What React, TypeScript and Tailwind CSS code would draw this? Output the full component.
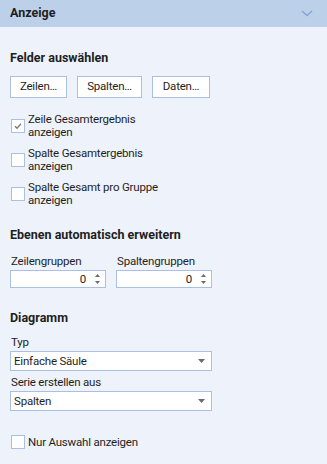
import React from "react";

const font = { fontFamily: 'Roboto, "Noto Sans", sans-serif' };

function Check({ checked = false }: { checked?: boolean }) {
  return (
    <div className="w-[14px] h-[14px] shrink-0 border border-[#a9bfe3] bg-white flex items-center justify-center">
      {checked && (
        <svg width="10" height="10" viewBox="0 0 10 10">
          <path d="M2 5.2 L4 7.2 L8 2.8" fill="none" stroke="#7a7a7a" strokeWidth="1.3" />
        </svg>
      )}
    </div>
  );
}

function CheckRow({ lines, checked }: { lines: string[]; checked?: boolean }) {
  return (
    <div className="flex items-center gap-[3px] pl-[1px]">
      <Check checked={checked} />
      <div className="leading-[13px]">
        {lines.map((l) => (
          <div key={l}>{l}</div>
        ))}
      </div>
    </div>
  );
}

function Spin({ label }: { label: string }) {
  return (
    <div className="flex flex-col w-[96px]">
      <div className="leading-[14px] pl-[1px] h-[16px]">{label}</div>
      <div className="h-[18px] border border-[#a9bfe3] bg-white flex items-center justify-end pr-[5px]">
        <span className="mr-[9px] leading-[14px]">0</span>
        <svg width="5" height="12" viewBox="0 0 5 12">
          <path d="M0 4 L2.5 1 L5 4 Z" fill="#6b6b6b" />
          <path d="M0 8 L2.5 11 L5 8 Z" fill="#6b6b6b" />
        </svg>
      </div>
    </div>
  );
}

function Select({ label, value }: { label: string; value: string }) {
  return (
    <div className="flex flex-col w-[202px]">
      <div className="leading-[14px] pl-[1px] h-[16px]">{label}</div>
      <div className="h-[20px] border border-[#a9bfe3] bg-white flex items-center justify-between pl-[3px] pr-[6px]">
        <span className="leading-[14px]">{value}</span>
        <svg width="7" height="4" viewBox="0 0 7 4">
          <path d="M0 0 L7 0 L3.5 4 Z" fill="#6b6b6b" />
        </svg>
      </div>
    </div>
  );
}

export default function App() {
  return (
    <div
      className="w-[327px] h-[464px] bg-[#eef3fb] text-[11.5px] tracking-[-0.2px] text-[#1e1e1e] overflow-hidden"
      style={font}
    >
      <div className="h-[27px] bg-[#bdd0e9] flex items-center justify-between pl-[10px] pr-[14px]">
        <span className="font-bold text-[12.5px] tracking-normal">Anzeige</span>
        <svg width="12" height="7" viewBox="0 0 12 7">
          <path d="M1 1 L6 5.5 L11 1" fill="none" stroke="#86a5d6" strokeWidth="1.4" />
        </svg>
      </div>
      <div className="px-[10px] flex flex-col">
        <div className="font-bold text-[12.5px] tracking-normal mt-[23px] leading-[16px]">Felder auswählen</div>
        <div className="flex gap-[10px] mt-[10px]">
          {[["Zeilen…", "w-[57px]"], ["Spalten…", "w-[65px]"], ["Daten…", "w-[58px]"]].map(([t, w]) => (
            <div key={t} className={`${w} h-[22px] border border-[#a9bfe3] bg-white flex items-center justify-center`}>
              {t}
            </div>
          ))}
        </div>
        <div className="flex flex-col gap-[8px] mt-[15px]">
          <CheckRow checked lines={["Zeile Gesamtergebnis", "anzeigen"]} />
          <CheckRow lines={["Spalte Gesamtergebnis", "anzeigen"]} />
          <CheckRow lines={["Spalte Gesamt pro Gruppe", "anzeigen"]} />
        </div>
        <div className="font-bold text-[12.5px] tracking-normal mt-[20px] leading-[16px]">
          Ebenen automatisch erweitern
        </div>
        <div className="flex gap-[10px] mt-[11px]">
          <Spin label="Zeilengruppen" />
          <Spin label="Spaltengruppen" />
        </div>
        <div className="font-bold text-[12.5px] tracking-normal mt-[22px] leading-[16px]">Diagramm</div>
        <div className="mt-[9px]">
          <Select label="Typ" value="Einfache Säule" />
        </div>
        <div className="mt-[4px]">
          <Select label="Serie erstellen aus" value="Spalten" />
        </div>
        <div className="flex items-center gap-[3px] pl-[1px] mt-[24px]">
          <Check />
          <span className="leading-[14px]">Nur Auswahl anzeigen</span>
        </div>
      </div>
    </div>
  );
}
